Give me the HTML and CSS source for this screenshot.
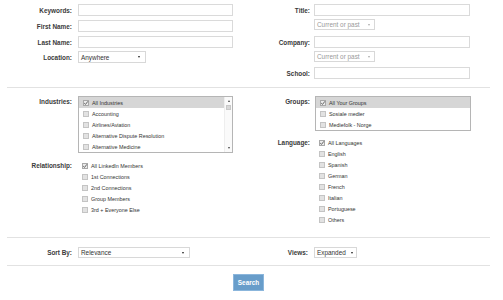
FILE: index.html
```html
<!DOCTYPE html>
<html>
<head>
  <title>Advanced People Search</title>
  <link rel="stylesheet" href="styles.css">
</head>
<body>

<div class="search-form">
  <!-- text fields -->
  <div class="section top">
    <div class="col">
      <div class="row">
        <label class="label">Keywords:</label>
        <input type="text" class="text-field">
      </div>
      <div class="row gap4">
        <label class="label">First Name:</label>
        <input type="text" class="text-field">
      </div>
      <div class="row gap4">
        <label class="label">Last Name:</label>
        <input type="text" class="text-field">
      </div>
      <div class="row gap3">
        <label class="label">Location:</label>
        <div class="select location-select"><span>Anywhere</span><i class="arrow"></i></div>
      </div>
    </div>

    <div class="col right">
      <div class="row">
        <label class="label">Title:</label>
        <input type="text" class="text-field">
      </div>
      <div class="row gap3 no-label">
        <div class="select muted"><span>Current or past</span><i class="arrow"></i></div>
      </div>
      <div class="row gap6">
        <label class="label">Company:</label>
        <input type="text" class="text-field">
      </div>
      <div class="row gap3 no-label">
        <div class="select muted"><span>Current or past</span><i class="arrow"></i></div>
      </div>
      <div class="row gap5">
        <label class="label">School:</label>
        <input type="text" class="text-field">
      </div>
    </div>
  </div>

  <div class="separator"></div>

  <!-- filters -->
  <div class="section mid">
    <div class="col">
      <div class="row top-align">
        <label class="label">Industries:</label>
        <div class="listbox industries">
          <div class="list-items">
            <div class="item selected"><span class="check on"><svg viewBox="0 0 6 6"><path d="M1.2 3.1 L2.5 4.4 L4.9 1.3"/></svg></span>All Industries</div>
            <div class="item"><span class="check"></span>Accounting</div>
            <div class="item"><span class="check"></span>Airlines/Aviation</div>
            <div class="item"><span class="check"></span>Alternative Dispute Resolution</div>
            <div class="item"><span class="check"></span>Alternative Medicine</div>
          </div>
          <div class="scrollbar">
            <i class="sb-up"></i>
            <i class="sb-thumb"></i>
            <i class="sb-space"></i>
            <i class="sb-down"></i>
          </div>
        </div>
      </div>
      <div class="row top-align relationship">
        <label class="label">Relationship:</label>
        <div class="check-list">
          <div class="item"><span class="check on"><svg viewBox="0 0 6 6"><path d="M1.2 3.1 L2.5 4.4 L4.9 1.3"/></svg></span>All LinkedIn Members</div>
          <div class="item"><span class="check"></span>1st Connections</div>
          <div class="item"><span class="check"></span>2nd Connections</div>
          <div class="item"><span class="check"></span>Group Members</div>
          <div class="item"><span class="check"></span>3rd + Everyone Else</div>
        </div>
      </div>
    </div>

    <div class="col right">
      <div class="row top-align">
        <label class="label">Groups:</label>
        <div class="listbox groups">
          <div class="list-items">
            <div class="item selected"><span class="check on"><svg viewBox="0 0 6 6"><path d="M1.2 3.1 L2.5 4.4 L4.9 1.3"/></svg></span>All Your Groups</div>
            <div class="item"><span class="check"></span>Sosiale medier</div>
            <div class="item"><span class="check"></span>Mediefolk - Norge</div>
          </div>
        </div>
      </div>
      <div class="row top-align language">
        <label class="label">Language:</label>
        <div class="check-list">
          <div class="item"><span class="check on"><svg viewBox="0 0 6 6"><path d="M1.2 3.1 L2.5 4.4 L4.9 1.3"/></svg></span>All Languages</div>
          <div class="item"><span class="check"></span>English</div>
          <div class="item"><span class="check"></span>Spanish</div>
          <div class="item"><span class="check"></span>German</div>
          <div class="item"><span class="check"></span>French</div>
          <div class="item"><span class="check"></span>Italian</div>
          <div class="item"><span class="check"></span>Portuguese</div>
          <div class="item"><span class="check"></span>Others</div>
        </div>
      </div>
    </div>
  </div>

  <div class="separator"></div>

  <!-- sorting -->
  <div class="section sort">
    <div class="col">
      <div class="row">
        <label class="label">Sort By:</label>
        <div class="select sort-select"><span>Relevance</span><i class="arrow"></i></div>
      </div>
    </div>
    <div class="col right">
      <div class="row views">
        <label class="label">Views:</label>
        <div class="select views-select"><span>Expanded</span><i class="arrow"></i></div>
      </div>
    </div>
  </div>

  <div class="separator"></div>

  <div class="actions">
    <button class="search-button">Search</button>
  </div>
</div>

</body>
</html>
```

FILE: styles.css
```css
body {
  margin: 0;
  background-color: #fff;
  font-family: "Liberation Sans", Arial, sans-serif;
  color: #333;
}

.search-form {
  width: 503px;
}

/* two column sections */
.section {
  display: grid;
  grid-template-columns: 250px 253px;
}

.top {
  padding-top: 4px;
  height: 87px;
  box-sizing: border-box;
}

.mid {
  padding-top: 8px;
  padding-bottom: 12px;
}

.sort {
  padding-top: 9px;
  padding-bottom: 7px;
}

.row {
  display: flex;
  align-items: center;
}

.top-align {
  align-items: flex-start;
}

.gap3 { margin-top: 3px; }
.gap4 { margin-top: 4px; }
.gap5 { margin-top: 5px; }
.gap6 { margin-top: 6px; }

.label {
  width: 72px;
  margin-right: 6px;
  text-align: right;
  font-size: 6.4px;
  font-weight: bold;
  color: #3a3a3a;
  line-height: 11px;
  flex-shrink: 0;
}

.right .label {
  width: 60px;
  margin-right: 4px;
}

.right .no-label {
  padding-left: 64px;
}

.right .views .label {
  width: 58px;
  margin-right: 6px;
}

/* fields */
.text-field {
  width: 155px;
  height: 12px;
  box-sizing: border-box;
  border: 1px solid #dadada;
  margin: 0;
  padding: 0;
  background-color: #fff;
}

.right .text-field {
  width: 156px;
}

.select {
  display: flex;
  align-items: center;
  height: 12px;
  box-sizing: border-box;
  border: 1px solid #d8d8d8;
  padding: 0 5px 0 2px;
  font-size: 6.4px;
  color: #333;
  background-color: #fff;
}

.select span {
  flex: 1;
}

.arrow {
  width: 0;
  height: 0;
  border-left: 1.5px solid transparent;
  border-right: 1.5px solid transparent;
  border-top: 2px solid #222;
}

.location-select {
  width: 68px;
}

.muted {
  width: 61px;
  height: 11px;
  color: #999;
  padding-right: 4px;
}

.muted .arrow {
  border-top-color: #aaa;
}

.sort-select {
  width: 112px;
  height: 11px;
}

.views-select {
  width: 43px;
  height: 11px;
  padding-right: 3px;
}

.separator {
  margin: 0 13px 0 7px;
  border-top: 1px solid #e2e2e2;
}

/* list boxes */
.listbox {
  display: flex;
  border: 1px solid #b5b5b5;
  box-sizing: border-box;
  background-color: #fff;
}

.industries {
  width: 155px;
  height: 57px;
}

.groups {
  width: 156px;
  margin-left: 1px;
}

.list-items {
  flex: 1;
}

.item {
  display: flex;
  align-items: center;
  height: 11px;
  padding-left: 4px;
  font-size: 5.4px;
  color: #333;
}

.item.selected {
  background-color: #d6d6d6;
}

.check {
  width: 6px;
  height: 6px;
  box-sizing: border-box;
  border: 1px solid #c4c4c4;
  background-color: #e2e2e2;
  margin-right: 3px;
  flex-shrink: 0;
  display: flex;
}

.check.on {
  background-color: #ececec;
  border-color: #a8a8a8;
}

.check svg {
  width: 6px;
  height: 6px;
  margin: -1px;
}

.check path {
  fill: none;
  stroke: #555;
  stroke-width: 0.9;
}

.scrollbar {
  width: 7px;
  display: flex;
  flex-direction: column;
  align-items: center;
  border-left: 1px solid #eee;
  background-color: #fafafa;
}

.sb-up,
.sb-down {
  width: 0;
  height: 0;
  border-left: 1.5px solid transparent;
  border-right: 1.5px solid transparent;
  margin: 3px 0;
}

.sb-up {
  border-bottom: 2px solid #444;
}

.sb-down {
  border-top: 2px solid #444;
}

.sb-thumb {
  width: 5px;
  height: 5px;
  background-color: #d8d8d8;
  border: 1px solid #c8c8c8;
  box-sizing: border-box;
}

.sb-space {
  flex: 1;
}

.relationship {
  margin-top: 7px;
}

.language {
  margin-top: 6px;
}

.check-list .item {
  padding-left: 4px;
}

.language .check-list .item {
  padding-left: 5px;
}

/* search button */
.actions {
  display: flex;
  justify-content: center;
  padding: 8px 6px 0 0;
}

.search-button {
  width: 31px;
  height: 17px;
  padding: 0;
  border: 1px solid #8bb6dc;
  background-color: #689dca;
  color: #fff;
  font-family: "Liberation Sans", Arial, sans-serif;
  font-size: 6.4px;
  font-weight: bold;
}
```
